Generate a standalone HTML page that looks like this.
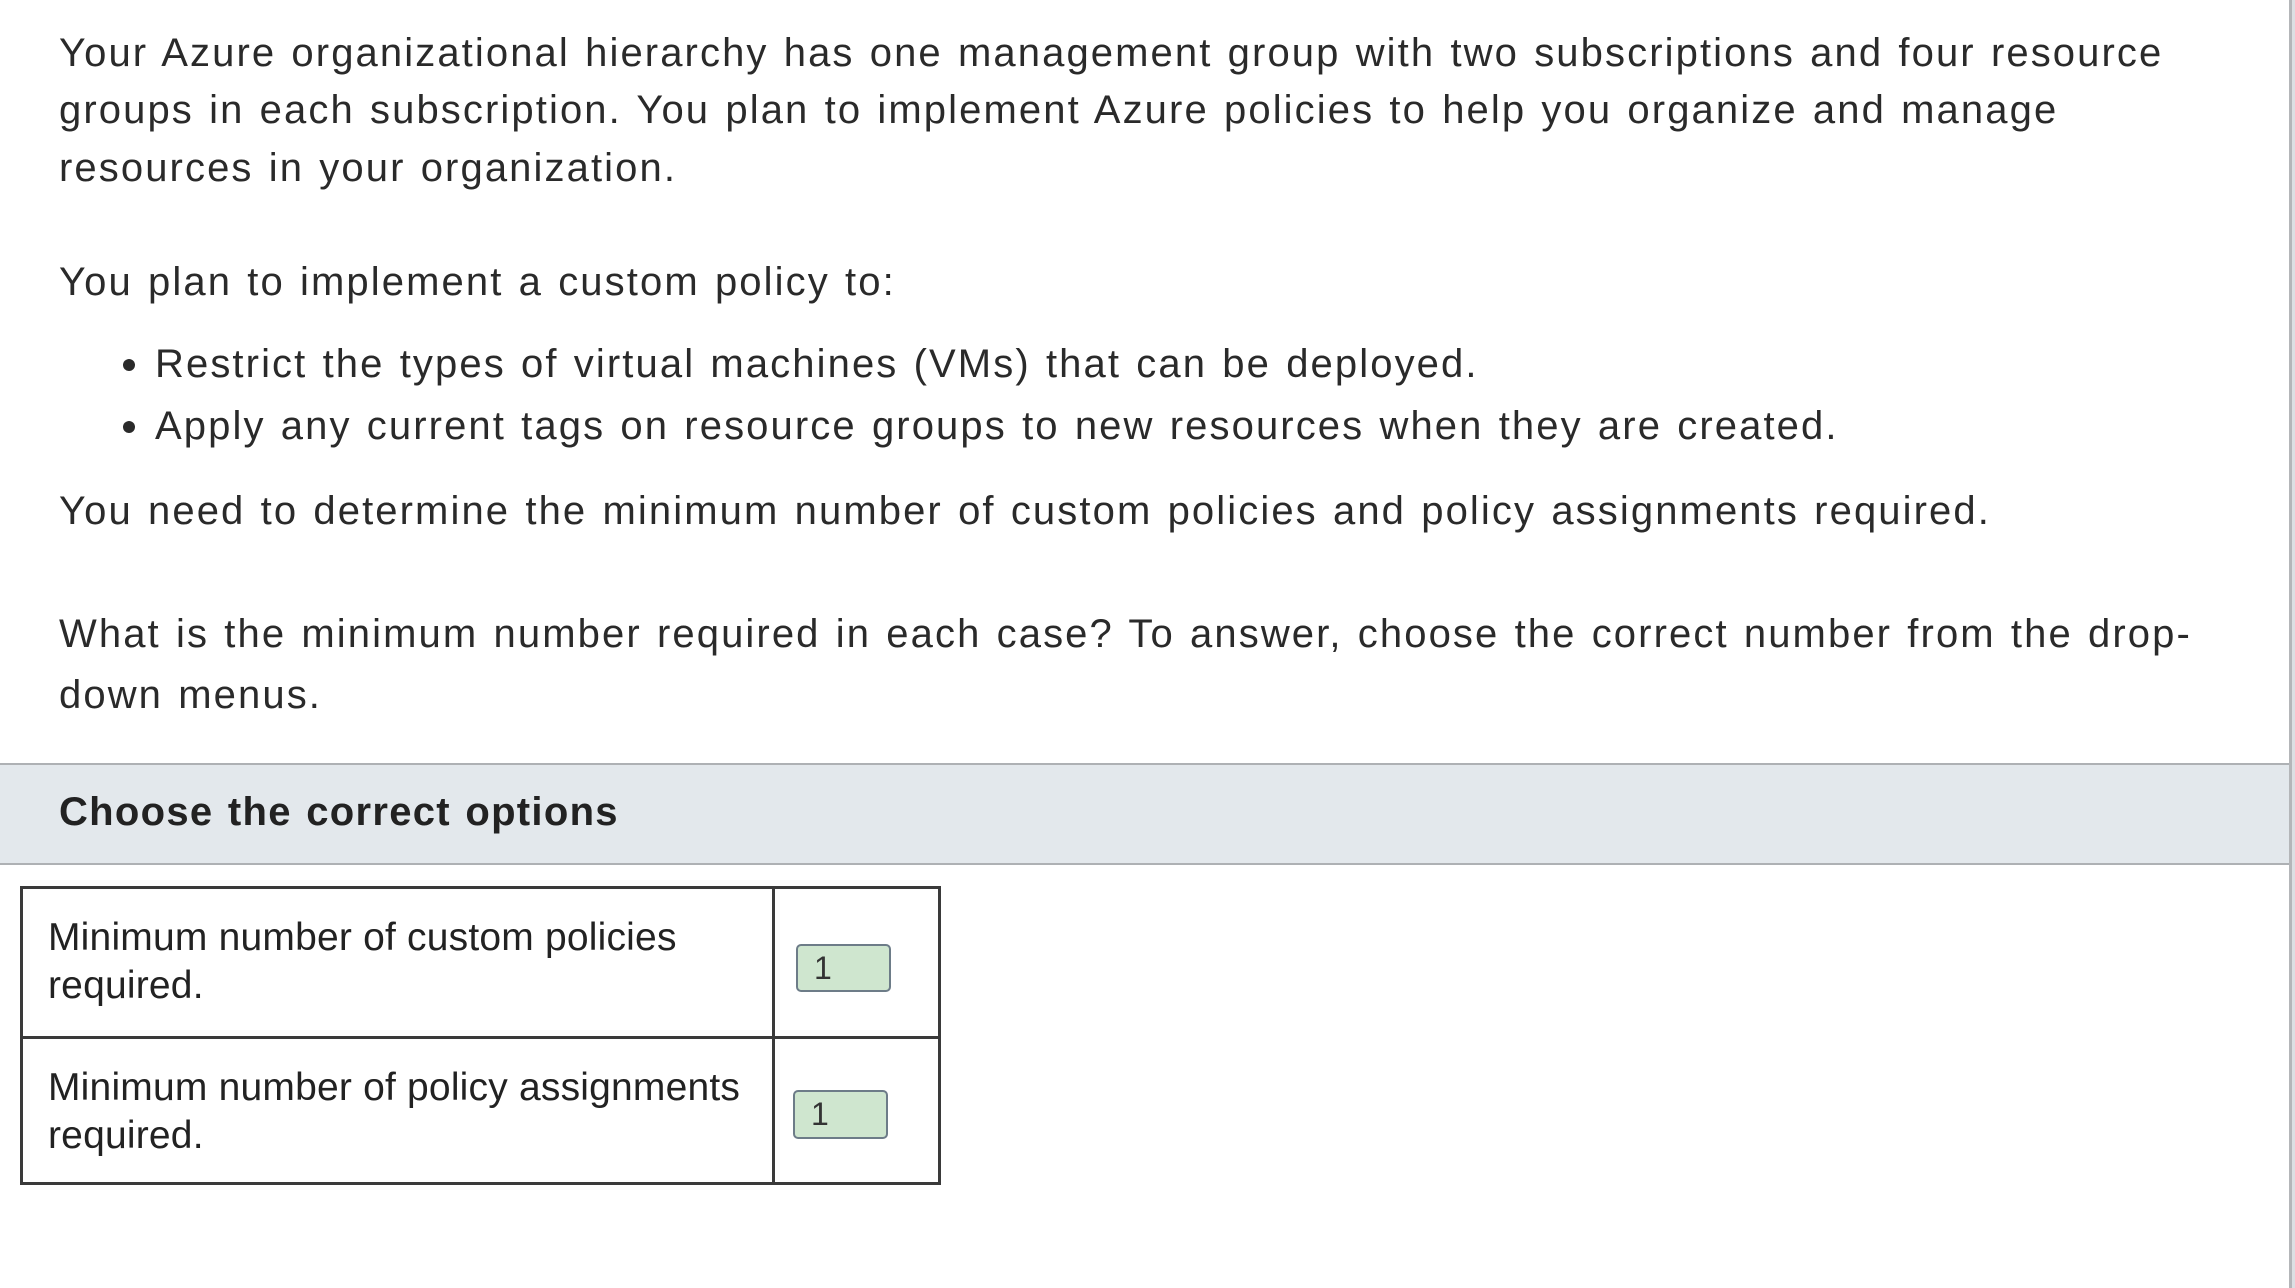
<!DOCTYPE html>
<html><head><style>
body{margin:0;width:2295px;height:1288px;background:#fff;position:relative;overflow:hidden;font-family:"Liberation Sans",sans-serif;color:#2a2a2a}
.t{position:absolute;left:59px;font-size:40px;letter-spacing:2.1px;word-spacing:2px;white-space:nowrap;line-height:58px}
.b{position:absolute;width:12px;height:12px;border-radius:50%;background:#2a2a2a;left:123px}
.sb{position:absolute;left:2289px;top:0;width:3px;height:1288px;background:#b4b6b9}
.sp{position:absolute;left:2292px;top:0;width:3px;height:1288px;background:#dcdfe3}
.band{position:absolute;left:0;top:763px;width:2289px;height:98px;background:#e3e8ec;border-top:2px solid #aeb1b4;border-bottom:2px solid #aeb1b4}
.ln{position:absolute;background:#3a3a3a}
.tt{position:absolute;left:48px;font-size:39px;line-height:48px;color:#222;white-space:nowrap;letter-spacing:0.2px}
.box{position:absolute;background:#cfe6cf;border:2px solid #6d7c88;border-radius:5px;font-size:32px;line-height:44px;color:#333;padding-left:16px;box-sizing:border-box}
</style></head><body>
<div class="t" style="top:24px">Your Azure organizational hierarchy has one management group with two subscriptions and four resource</div>
<div class="t" style="top:81px">groups in each subscription. You plan to implement Azure policies to help you organize and manage</div>
<div class="t" style="top:139px">resources in your organization.</div>
<div class="t" style="top:253px">You plan to implement a custom policy to:</div>
<div class="b" style="top:359px"></div>
<div class="t" style="top:335px;left:155px">Restrict the types of virtual machines (VMs) that can be deployed.</div>
<div class="b" style="top:421px"></div>
<div class="t" style="top:397px;left:155px">Apply any current tags on resource groups to new resources when they are created.</div>
<div class="t" style="top:482px">You need to determine the minimum number of custom policies and policy assignments required.</div>
<div class="t" style="top:605px">What is the minimum number required in each case? To answer, choose the correct number from the drop-</div>
<div class="t" style="top:666px">down menus.</div>
<div class="band"></div>
<div class="t" style="top:783px;font-weight:bold;color:#222;letter-spacing:1.3px">Choose the correct options</div>
<div class="sb"></div><div class="sp"></div>
<div class="ln" style="left:20px;top:886px;width:921px;height:3px"></div>
<div class="ln" style="left:20px;top:1036px;width:921px;height:3px"></div>
<div class="ln" style="left:20px;top:1182px;width:921px;height:3px"></div>
<div class="ln" style="left:20px;top:886px;width:3px;height:299px"></div>
<div class="ln" style="left:772px;top:886px;width:3px;height:299px"></div>
<div class="ln" style="left:938px;top:886px;width:3px;height:299px"></div>
<div class="tt" style="top:914px">Minimum number of custom policies<br>required.</div>
<div class="tt" style="top:1064px">Minimum number of policy assignments<br>required.</div>
<div class="box" style="left:796px;top:944px;width:95px;height:48px">1</div>
<div class="box" style="left:793px;top:1090px;width:95px;height:49px">1</div>
</body></html>
